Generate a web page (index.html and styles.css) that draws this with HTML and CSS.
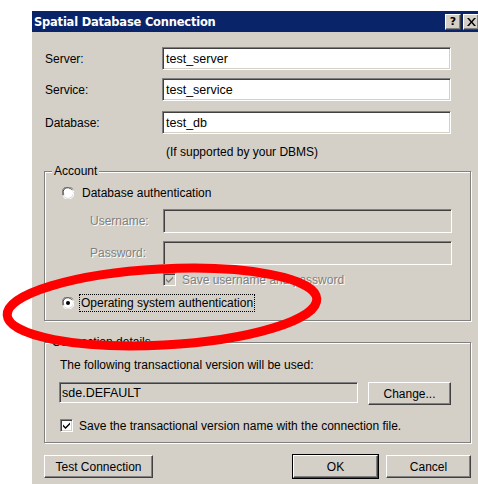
FILE: index.html
```html
<!DOCTYPE html>
<html lang="en">
<head>
<meta charset="utf-8">
<title>Spatial Database Connection</title>
<link rel="stylesheet" href="styles.css">
</head>
<body>
<div class="dialog">
  <div class="titlebar">
    <span class="title">Spatial Database Connection</span>
    <div class="caption-btns">
      <span class="cap-btn help">?</span>
      <span class="cap-btn close">
        <svg width="9" height="8" viewBox="0 0 9 8"><path d="M0 0h2l2.5 3 2.5-3h2l-3.5 4 3.5 4h-2l-2.5-3-2.5 3h-2l3.5-4z" fill="#000"/></svg>
      </span>
    </div>
  </div>
  <div class="client">
    <div class="fields">
      <div class="row"><span class="lbl">Server:</span><div class="edit">test_server</div></div>
      <div class="row"><span class="lbl">Service:</span><div class="edit">test_service</div></div>
      <div class="row db"><span class="lbl">Database:</span><div class="edit">test_db</div></div>
    </div>
    <div class="hint">(If supported by your DBMS)</div>

    <fieldset class="group account">
      <legend>Account</legend>
      <div class="radio-row">
        <svg class="radio" width="12" height="12" viewBox="0 0 12 12">
          <path d="M11 2.5A5.5 5.5 0 0 0 0.8 8.2" fill="none" stroke="#808080" stroke-width="1"/>
          <circle cx="6" cy="6" r="5" fill="#fff"/>
          <path d="M9.6 2.8A4.5 4.5 0 0 0 1.8 7.8" fill="none" stroke="#404040" stroke-width="1"/>
          <path d="M1 9.2A5.5 5.5 0 0 0 11.2 3.6" fill="none" stroke="#fff" stroke-width="1"/>
        </svg>
        <span>Database authentication</span>
      </div>
      <div class="cred">
        <div class="row"><span class="lbl off">Username:</span><div class="edit off"></div></div>
        <div class="row"><span class="lbl off">Password:</span><div class="edit off"></div></div>
        <div class="check-row off">
          <span class="check dim">
            <svg width="9" height="9" viewBox="0 0 9 9"><path d="M1 3.5l2.5 2.5 4.5-4.5v2l-4.5 4.5-2.5-2.5z" fill="#808080"/></svg>
          </span>
          <span class="off-text">Save username and password</span>
        </div>
      </div>
      <div class="radio-row os">
        <svg class="radio" width="12" height="12" viewBox="0 0 12 12">
          <path d="M11 2.5A5.5 5.5 0 0 0 0.8 8.2" fill="none" stroke="#808080" stroke-width="1"/>
          <circle cx="6" cy="6" r="5" fill="#fff"/>
          <path d="M9.6 2.8A4.5 4.5 0 0 0 1.8 7.8" fill="none" stroke="#404040" stroke-width="1"/>
          <path d="M1 9.2A5.5 5.5 0 0 0 11.2 3.6" fill="none" stroke="#fff" stroke-width="1"/>
          <circle cx="6" cy="6" r="2" fill="#000"/>
        </svg>
        <span class="focus">Operating system authentication</span>
      </div>
    </fieldset>

    <fieldset class="group conn">
      <legend>Connection details</legend>
      <div class="note">The following transactional version will be used:</div>
      <div class="version-row">
        <div class="edit ro">sde.DEFAULT</div>
        <button class="btn change">Change...</button>
      </div>
      <div class="check-row">
        <span class="check">
          <svg width="9" height="9" viewBox="0 0 9 9"><path d="M1 3.5l2.5 2.5 4.5-4.5v2l-4.5 4.5-2.5-2.5z" fill="#000"/></svg>
        </span>
        <span>Save the transactional version name with the connection file.</span>
      </div>
    </fieldset>

    <div class="footer">
      <button class="btn test">Test Connection</button>
      <div class="actions">
        <button class="btn default">OK</button>
        <button class="btn">Cancel</button>
      </div>
    </div>
  </div>
</div>

<svg class="markup" width="478" height="484" viewBox="0 0 478 484">
  <ellipse cx="162" cy="307" rx="155" ry="38" transform="rotate(-3 162 307)" fill="none" stroke="#ff0000" stroke-width="9"/>
</svg>
</body>
</html>
```

FILE: styles.css
```css
html, body {
  margin: 0;
  padding: 0;
  background: #ffffff;
  overflow: hidden;
}

body {
  position: relative;
  width: 478px;
  height: 484px;
  font-family: "Liberation Sans", Arial, sans-serif;
  font-size: 12px;
  color: #000;
}

/* window frame */
.dialog {
  margin: 11px 0 0 32px;
  width: 451px;
  height: 480px;
  background: #d4d0c8;
}

.titlebar {
  height: 21px;
  background: #0a246a;
  display: flex;
  align-items: center;
  justify-content: space-between;
  padding: 0 4px 0 2px;
}

.title {
  color: #fff;
  font-family: "DejaVu Sans", Verdana, sans-serif;
  font-weight: bold;
  font-size: 11.5px;
  letter-spacing: -0.22px;
}

.caption-btns {
  display: flex;
  gap: 2px;
}

.cap-btn {
  width: 14px;
  height: 14px;
  background: #d4d0c8;
  border: 1px solid;
  border-color: #fff #404040 #404040 #fff;
  box-shadow: inset -1px -1px 0 #808080;
  display: flex;
  align-items: center;
  justify-content: center;
  font-family: "DejaVu Sans", Verdana, sans-serif;
  font-weight: bold;
  font-size: 11px;
  line-height: 1;
}

/* client area */
.client {
  padding: 15px 12px 0 12px;
}

.row {
  display: flex;
  align-items: center;
  height: 23px;
}

.row + .row {
  margin-top: 8px;
}

.row.db {
  margin-top: 10px;
}

.lbl {
  width: 118px;
  padding-left: 1px;
  box-sizing: border-box;
}

.lbl.off {
  width: 74px;
}

.off, .off-text {
  color: #808080;
  text-shadow: 1px 1px 0 #fff;
}

.edit {
  box-sizing: border-box;
  width: 289px;
  height: 23px;
  background: #fff;
  border: 1px solid;
  border-color: #808080 #fff #fff #808080;
  box-shadow: inset 1px 1px 0 #404040, inset -1px -1px 0 #d4d0c8;
  padding: 0 3px 0 3px;
  display: flex;
  align-items: center;
  font-size: 12.5px;
}

.edit.off {
  background: #d4d0c8;
  height: 24px;
}

.hint {
  margin: 11px 0 0 122px;
  line-height: 14px;
}

/* group boxes */
.group {
  margin: 5px 0 0 0;
  padding: 0 0 9px 17px;
  border: 1px solid #808080;
  box-shadow: inset 1px 1px 0 #fff, 1px 1px 0 #fff;
  min-inline-size: 0;
  width: 427px;
  box-sizing: border-box;
}

.group legend {
  padding: 0 2px;
  margin-left: -10px;
  line-height: 14px;
  background: #d4d0c8;
}

.radio-row {
  display: flex;
  align-items: center;
  height: 14px;
  margin-top: 8px;
  gap: 8px;
}

.radio {
  display: block;
}

.radio-row.os {
  height: 16px;
  margin-top: 9px;
}

.focus {
  outline: 1px dotted #000;
  outline-offset: 0;
  padding: 1px 1px;
  margin-left: -2px;
}

.cred {
  margin: 9px 0 0 27px;
}

.cred .row {
  height: 24px;
}

.check-row {
  display: flex;
  align-items: center;
  gap: 6px;
  height: 13px;
  margin-top: 8px;
}

.cred .check-row {
  margin-left: 74px;
}

.check {
  box-sizing: border-box;
  width: 13px;
  height: 13px;
  background: #fff;
  border: 1px solid;
  border-color: #808080 #fff #fff #808080;
  box-shadow: inset 1px 1px 0 #404040, inset -1px -1px 0 #d4d0c8;
  display: flex;
  align-items: center;
  justify-content: center;
}

.check.dim {
  background: #d4d0c8;
}

.check svg {
  display: block;
}

/* connection details */
.group.conn {
  margin-top: 14px;
  padding: 0 0 10px 15px;
}

.note {
  margin-top: 9px;
  line-height: 14px;
}

.version-row {
  display: flex;
  align-items: flex-start;
  gap: 10px;
  margin-top: 10px;
  margin-left: -1px;
}

.edit.ro {
  background: #d4d0c8;
  width: 299px;
  height: 21px;
  padding-left: 2px;
}

.conn .check-row {
  margin-top: 14px;
}

/* push buttons */
.btn {
  box-sizing: border-box;
  height: 23px;
  width: 85px;
  background: #d4d0c8;
  border: 1px solid;
  border-color: #fff #404040 #404040 #fff;
  box-shadow: inset -1px -1px 0 #808080;
  font-family: "Liberation Sans", Arial, sans-serif;
  font-size: 12px;
  color: #000;
  padding: 0;
}

.btn.change {
  width: 83px;
}

.btn.test {
  width: 109px;
}

.btn.default {
  outline: 1px solid #000;
  outline-offset: 0;
  border-color: #fff #404040 #404040 #fff;
}

.footer {
  display: flex;
  justify-content: space-between;
  margin-top: 12px;
}

.actions {
  display: flex;
  gap: 8px;
}

/* annotation over the dialog */
.markup {
  position: absolute;
  left: 0;
  top: 0;
  pointer-events: none;
}
```
